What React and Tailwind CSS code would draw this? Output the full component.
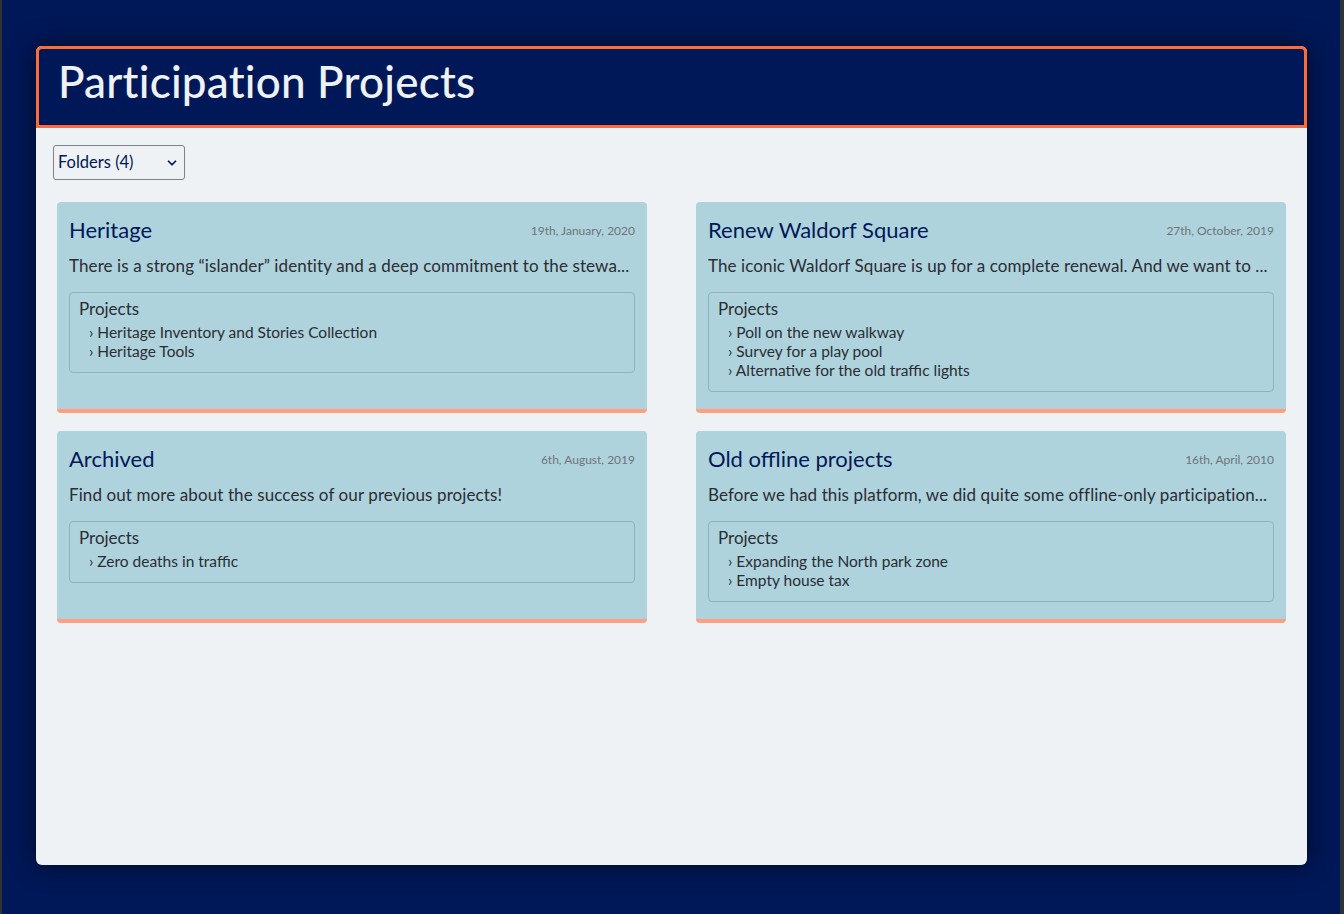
import { ChevronDown } from 'lucide-react';

const folders = [
  {
    title: 'Heritage',
    date: '19th, January, 2020',
    description: 'There is a strong “islander” identity and a deep commitment to the stewa...',
    projects: ['Heritage Inventory and Stories Collection', 'Heritage Tools'],
  },
  {
    title: 'Renew Waldorf Square',
    date: '27th, October, 2019',
    description: 'The iconic Waldorf Square is up for a complete renewal. And we want to ...',
    projects: ['Poll on the new walkway', 'Survey for a play pool', 'Alternative for the old traffic lights'],
  },
  {
    title: 'Archived',
    date: '6th, August, 2019',
    description: 'Find out more about the success of our previous projects!',
    projects: ['Zero deaths in traffic'],
  },
  {
    title: 'Old offline projects',
    date: '16th, April, 2010',
    description: 'Before we had this platform, we did quite some offline-only participation...',
    projects: ['Expanding the North park zone', 'Empty house tax'],
  },
];

// Single folder card
function FolderCard({ folder }) {
  return (
    <div className="rounded-[4px] bg-[#aed3dc] border-b-4 border-[#ff9f7f] px-3 pt-3 pb-[17px]">
      <div className="flex items-center justify-between h-8">
        <h3 className="text-[22px] leading-8 text-[#001858]">{folder.title}</h3>
        <span className="text-[12px] pt-0.5 text-[#6f7379]">{folder.date}</span>
      </div>
      <p className="mt-2 text-[17px] leading-6 tracking-[0.1px] text-[#2b2c34] whitespace-nowrap overflow-hidden">
        {folder.description}
      </p>
      <div className="mt-3.5 border border-[#8fb3bd] rounded-[4px] px-[9px] pt-1 pb-[11px]">
        <div className="text-[17px] leading-6 text-[#2b2c34]">Projects</div>
        <ul className="mt-0.5 pl-[10px]">
          {folder.projects.map((p) => (
            <li key={p} className="text-[15.5px] leading-[19px] text-[#2b2c34]">
              › {p}
            </li>
          ))}
        </ul>
      </div>
    </div>
  );
}

export default function App() {
  return (
    <div
      className="min-h-[914px] bg-[#001858] border-l-2 border-r-4 border-[#2d3336] pl-[34px] pr-[33px] pt-[46px] pb-[49px]"
      style={{ fontFamily: 'Lato, "Noto Sans", sans-serif' }}
    >
      <div className="h-[819px] rounded-[6px] bg-[#eef2f5] shadow-[0_0_24px_rgba(0,0,0,0.6)] flex flex-col">
        <header className="h-[82px] rounded-t-[6px] border-[3px] border-[#ff6b35] bg-[#001858] px-[19px] flex items-center">
          <h1 className="text-[44px] leading-none font-medium text-[#eef2f5] tracking-[0.2px] pb-[12px]">
            Participation Projects
          </h1>
        </header>

        <div className="px-[17px] pt-[17px]">
          <div className="relative w-[132px] h-[35px]">
            <select className="appearance-none w-full h-full border border-[#7d8188] rounded-[3px] bg-[#eef2f5] pl-1 text-[16.5px] text-[#001858]">
              <option>Folders (4)</option>
            </select>
            <ChevronDown
              className="absolute right-[6px] top-[11px] w-[14px] h-[14px] text-[#001858] pointer-events-none"
              strokeWidth={3}
            />
          </div>
        </div>

        <div className="grid grid-cols-2 gap-x-[49px] gap-y-[18px] px-[21px] pt-[22px]">
          {folders.map((f) => (
            <FolderCard key={f.title} folder={f} />
          ))}
        </div>
      </div>
    </div>
  );
}
